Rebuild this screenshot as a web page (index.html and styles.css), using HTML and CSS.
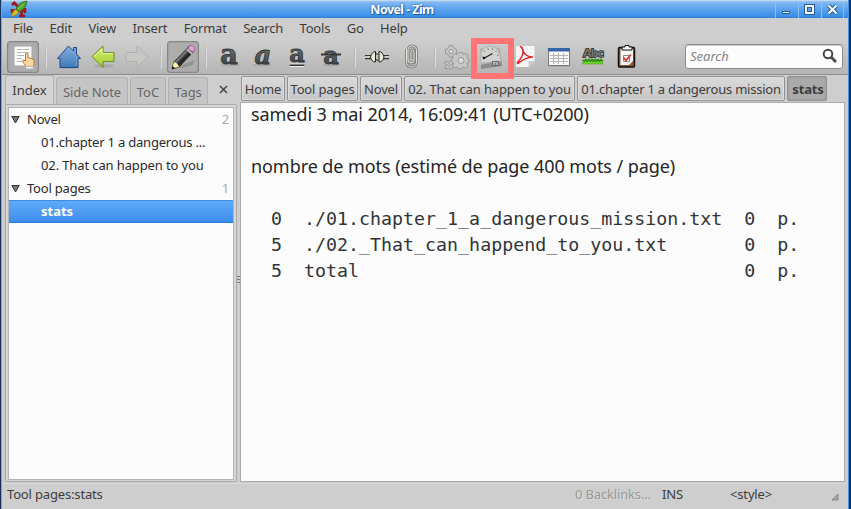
FILE: index.html
```html
<!DOCTYPE html>
<html lang="fr">
<head>
<meta charset="utf-8">
<title>Novel - Zim</title>
<link rel="stylesheet" href="styles.css">
</head>
<body>
<div class="window">
  <header class="titlebar">
    <svg class="logo" width="18" height="18" viewBox="0 0 18 18"><path d="M4 2.500l4 4M2 5l3-3M2 11l5-1M2 9v4M11 10l1 6M9 16h6M11 9l4 2M15 8v5" fill="none" stroke="#a5151c" stroke-width="2.600"/><path d="M1 17Q2 11 6 9l3 3q-3 4-8 5" fill="#d8b92a" stroke="#756b1b" stroke-width=".7"/><path d="M6 9Q9 2 17 1q-1 8-8 11z" fill="#55a82b" stroke="#246720" stroke-width=".8"/><path d="M8 9l6-5" stroke="#8fd058"/></svg>
    <h1>Novel - Zim</h1>
    <div class="controls">
      <span><svg width="11" height="11"><path d="M1.500 7.500h7v2h-7z" fill="#fff" stroke="#235996"/></svg></span>
      <span><svg width="11" height="11"><path d="M2 2h7v7H2z" fill="none" stroke="#235996" stroke-width="4"/><path d="M2 2h7v7H2z" fill="none" stroke="#fff" stroke-width="2"/></svg></span>
      <span><svg width="11" height="11"><path d="M1.500 1.500l8 8m0-8l-8 8" stroke="#235996" stroke-width="4"/><path d="M1.500 1.500l8 8m0-8l-8 8" stroke="#fff" stroke-width="2"/></svg></span>
    </div>
  </header>
  <nav class="menu"><span>File</span><span>Edit</span><span>View</span><span>Insert</span><span>Format</span><span>Search</span><span>Tools</span><span>Go</span><span>Help</span></nav>
  <div class="toolbar">
    <span class="tool pressed"><svg viewBox="0 0 34 34"><path d="M9 7h16v18H9z" fill="#fff" stroke="#f3f3ef"/><path d="M11 9.500h12M11 12.500h12M11 15.500h7M11 18.500h5M11 21.500h5" stroke="#b7b7b3"/><path d="M19.500 21v-7q1.500-2 2.500 0v4q1.500-1 2 .5 1.500-.8 2 .5 2-.5 2 1.500v3q0 2-1.500 3h-6q-3-3-4-6 1-1.500 3 .5z" fill="#fbd6a2" stroke="#b87624"/><path d="M20 27.500h7" stroke="#e9f3ff" stroke-width="2"/></svg></span>
    <i class="sep"></i>
    <span class="tool"><svg viewBox="0 0 34 34"><ellipse cx="17" cy="28" rx="11" ry="1" fill="#aaa"/><path d="M16.500 6l5 5V7.500h3V14l4 4.500H26v9H8v-9H5.500z" fill="url(#blue)" stroke="#204a87"/><path d="M16.500 8l8 8.500V26" fill="none" stroke="#85b3df" opacity=".6"/></svg></span>
    <span class="tool"><svg viewBox="0 0 34 34"><ellipse cx="18" cy="26" rx="10" ry="2" fill="#aaa"/><path d="M6 16.500L17 6v6.500h11v9H17v6z" fill="url(#green)" stroke="#669020"/><path d="M8 16.500L16 9v4.500h11" fill="none" stroke="#e8f8a8"/></svg></span>
    <span class="tool"><svg viewBox="0 0 34 34"><path d="M28 16.500L17 6v6.500H6v9h11v6z" fill="#c7c7c5" stroke="#aeb0ac"/></svg></span>
    <i class="sep"></i>
    <span class="tool pressed"><svg viewBox="0 0 34 34"><path d="M11 27l18-7-2 5-11 3z" fill="#777" opacity=".5"/><path d="M8 22L23.500 6l5 4.500L13 27l-7 2z" fill="#444" stroke="#222"/><path d="M9 23L22 9.500" stroke="#787878" stroke-width="2"/><path d="M12 25L26 11" stroke="#222" stroke-width="2"/><path d="M22 8l3-3q4 1 4 5l-2.500 2z" fill="#dda4cf" stroke="#a6689c"/><path d="M21 9l5 5" stroke="#bbb" stroke-width="2"/><path d="M8 22l-2 6.500L13 27q-1-4-5-5z" fill="#fff3a1"/><path d="M6 26v3l3-1z" fill="#111"/></svg></span>
    <i class="sep"></i>
    <span class="tool"><svg viewBox="0 0 34 34"><ellipse cx="18" cy="25" rx="10" ry="1.500" fill="#aaa"/><text x="17" y="24" text-anchor="middle" class="letter big">a</text></svg></span>
    <span class="tool"><svg viewBox="0 0 34 34"><ellipse cx="16" cy="25" rx="10" ry="1.500" fill="#aaa"/><text x="17" y="24" text-anchor="middle" class="letter italic">a</text></svg></span>
    <span class="tool"><svg viewBox="0 0 34 34"><text x="17" y="21.500" text-anchor="middle" class="letter">a</text><path d="M9.500 25.200h15" stroke="#fff" stroke-width="3"/><path d="M9.500 25.200h15" stroke="#2e3436" stroke-width="1.600"/></svg></span>
    <span class="tool"><svg viewBox="0 0 34 34"><ellipse cx="17" cy="25" rx="9" ry="1.500" fill="#aaa"/><text x="17" y="24" text-anchor="middle" class="letter">a</text><path d="M7 14.500h20" stroke="#2e3436" stroke-width="2"/></svg></span>
    <i class="sep narrow"></i>
    <span class="tool"><svg viewBox="0 0 34 34"><path d="M5 16.500h7m11 0h6" stroke="#fff" stroke-width="5"/><path d="M5 15.500h7m10 0h7M5 18.500h7m10 0h7" stroke="#333" stroke-width="1.400"/><path d="M15.500 11.500v10.500q-4 0-5-5 1-5 5-5.500zM19 11.500v10.500q4 0 5-5-1-5-5-5.500z" fill="#e9e7d8" stroke="#24241f"/><path d="M15.500 14h3m-3 6h3" stroke="#24241f"/></svg></span>
    <span class="tool"><svg viewBox="0 0 34 34"><path d="M12.500 9v12q0 6 5 6t5-6V11q0-5-4.500-5T14 11v9q0 3 3 3t3-3v-8q0-2-1.500-2T17 12v7" fill="none" stroke="#80827f" stroke-width="2.800"/><path d="M12.500 9v12q0 6 5 6t5-6V11q0-5-4.500-5T14 11v9q0 3 3 3t3-3v-8q0-2-1.500-2T17 12v7" fill="none" stroke="#e3e4e0" stroke-width="1"/></svg></span>
    <i class="sep narrow"></i>
    <span class="tool"><svg viewBox="0 0 34 34"><g fill="#c6c6c4" stroke="#969895"><path d="M9.500 5.500h3l1 2 3 2v4l-3 1-1 2.500h-3l-1-2.500-3-1v-4l3-2z"/><path d="M19.500 12.500h3l1 2 3-1 1.500 2.500-1 2 2 1v3l-2 1 1 3-2.500 2-3-1-1 2h-3l-1-2-3 1-2-2 1-3-2-1v-3l2-1-1-2.500 2-2 3 1z"/><path d="M5.500 21l3 1 3-1 1.500 1.500-1 2.500 1 3-1.500 1-3-1-3 1L5 28l1-3-1-2.500z"/></g><g fill="#ddd" stroke="#969895"><circle cx="11" cy="11.500" r="2"/><circle cx="21" cy="20.500" r="3"/><circle cx="9" cy="25" r="1.300"/></g></svg></span>
    <span class="tool"><svg viewBox="0 0 34 34"><path d="M6 8l3 1q4-4 9-3l6 2 2-1 2 14v5L7 29z" fill="#b0b1ae"/><path d="M7 25l20-4 1 5-21 3z" fill="#8b8c89"/><path d="M7 23V13Q10 6 17 6q9 2 10 15z" fill="#d2d2d0" stroke="#b5b5b3"/><path d="M10 11l1 1m3-3.500l.5 1.500m4-1.500v1.500m4 1l-1 1m3 3l-1.500.500M8 17h1.500" stroke="#777"/><path d="M10.500 18l8-4.500" stroke="#222" stroke-width="1.300"/><circle cx="10" cy="18" r="1.200"/><path d="M18.500 21.500h6v4h-6z" fill="#b5b5b3" stroke="#666"/><path d="M21.500 23v2" stroke="#777"/></svg></span>
    <span class="tool"><svg viewBox="0 0 34 34"><path d="M8 6h18.500v15l-6 6H8z" fill="#f5f5f5"/><path d="M26.500 21h-6v6z" fill="#ccc"/><path d="M12 7q2-1 3 4 3 6 10 6-6-.500-15 6.500-2 0 2-4 5-7 2-12" fill="none" stroke="#df262b" stroke-width="1.500"/></svg></span>
    <span class="tool"><svg viewBox="0 0 34 34"><path d="M6 9h22v18H6z" fill="#aaa"/><path d="M6.500 8.500h21v17h-21z" fill="#f8f8f7" stroke="#777"/><path d="M6 8h22v3.500H6z" fill="#3465a4"/><path d="M8 15.500h18m-18 3h18m-18 3h18M11.500 13v11m5-11v11m5-11v11" stroke="#b5b5b3"/></svg></span>
    <span class="tool"><svg viewBox="0 0 34 34"><text x="17" y="17" text-anchor="middle" class="abc">Abc</text><path d="M7 20l1.500 1.500L10 20l1.500 1.500L13 20l1.500 1.500L16 20l1.500 1.500L19 20l1.500 1.500L22 20l1.500 1.500L25 20l1.500 1.500M6.500 23h20.500" fill="none" stroke="#348d13" stroke-width="2.400"/><path d="M7 22l1.500 1.500L10 22l1.500 1.500L13 22l1.500 1.500L16 22l1.500 1.500L19 22l1.500 1.500L22 22l1.500 1.500L25 22l1.500 1.500" fill="none" stroke="#70dc2d" stroke-width="1.500"/></svg></span>
    <span class="tool"><svg viewBox="0 0 34 34"><rect x="8.500" y="7.500" width="16" height="19.500" rx="1" fill="#8b5a32" stroke="#111" stroke-width="1.500"/><path d="M10.500 9h12.500v12l-4 4h-8.500z" fill="#f5f5f5"/><path d="M12 10V7h3V5.500h4V7h3v3z" fill="#fff" stroke="#111"/><path d="M13.500 15.500h6v6h-6z" fill="#fff" stroke="#888"/><path d="M13.500 17.500l2.500 3 5-6" fill="none" stroke="#dc3b2b" stroke-width="1.800"/></svg></span>
    <div class="search"><em>Search</em><svg width="18" height="18"><circle cx="7" cy="6" r="4.300" fill="none" stroke="#484848" stroke-width="2"/><path d="M10 9l5 5" stroke="#484848" stroke-width="2.800"/></svg></div>
    <div class="highlight"></div>
  </div>
  <main class="body">
    <aside class="side">
      <div class="tabs"><span class="tab active">Index</span><span class="tab t2">Side Note</span><span class="tab t3">ToC</span><span class="tab t4">Tags</span><svg class="close" width="9" height="9"><path d="M1 1l7 7m0-7l-7 7" stroke="#484848" stroke-width="1.600"/></svg></div>
      <div class="notebook"><div class="tree">
        <div class="row"><svg class="tri" width="9" height="8"><path d="M.8.500h7.400L4.500 7z" fill="#777" stroke="#333"/></svg><span>Novel</span><small>2</small></div>
        <div class="row child"><span>01.chapter 1 a dangerous ...</span></div>
        <div class="row child second"><span>02. That can happen to you</span></div>
        <div class="row"><svg class="tri" width="9" height="8"><path d="M.8.500h7.400L4.500 7z" fill="#777" stroke="#333"/></svg><span>Tool pages</span><small>1</small></div>
        <div class="row child selected"><span>stats</span></div>
      </div></div>
    </aside>
    <div class="splitter"><i></i><i></i><i></i></div>
    <section class="page">
      <div class="path"><span class="p1">Home</span><span class="p2">Tool pages</span><span class="p3">Novel</span><span class="p4">02. That can happen to you</span><span class="p5">01.chapter 1 a dangerous mission</span><span class="p6">stats</span></div>
      <div class="editor">
        <p>samedi 3 mai 2014, 16:09:41 (UTC+0200)</p>
        <p class="est">nombre de mots (estimé de page 400 mots / page)</p>
<pre>  0  ./01.chapter_1_a_dangerous_mission.txt  0  p.
  5  ./02._That_can_happend_to_you.txt       0  p.
  5  total                                   0  p.</pre>
      </div>
    </section>
  </main>
  <footer class="status"><span class="where">Tool pages:stats</span><span class="links">0 Backlinks...</span><span class="ins">INS</span><span class="style">&lt;style&gt;</span><svg width="8" height="8"><path d="M7 1v6H1z" fill="#aaa" stroke="#888"/></svg></footer>
</div>
<svg width="0" height="0" class="defs"><defs><linearGradient id="blue" x2="0" y2="1"><stop stop-color="#84b0dc"/><stop offset="1" stop-color="#407ab8"/></linearGradient><linearGradient id="green" x2="0" y2="1"><stop stop-color="#d9ef70"/><stop offset="1" stop-color="#9fca32"/></linearGradient><linearGradient id="ink" x2="0" y2="1"><stop stop-color="#888a85"/><stop offset="1" stop-color="#2e3436"/></linearGradient></defs></svg>
</body>
</html>
```
FILE: styles.css
```css
* { box-sizing: border-box; }
body { margin: 0; width: 851px; height: 509px; overflow: hidden; background: #16325c; font: 13px/20px "Noto Sans", sans-serif; letter-spacing: -.16px; color: #3c3c3c; white-space: nowrap; }
svg { display: block; }
.defs { position: absolute; }
.window { width: 848px; height: 509px; margin-left: 1px; border-left: 1px solid #66aaf5; border-right: 1px solid #4094f1; background: #cecece; display: flex; flex-direction: column; }
.titlebar { height: 18px; display: flex; align-items: center; background: linear-gradient(#d5e5f5 0, #84b8f0 2px, #66a9ee 7px, #3d8fe8 16px, #2f7fd9); }
.logo { margin-left: 8px; }
h1 { flex: 1; margin: 0; padding-left: 1px; text-align: center; font-size: 12.5px; line-height: 19px; color: #fff; text-shadow: 0 0 2px #174e90, 1px 1px 0 #2464ae; letter-spacing: -.58px; }
.controls { display: flex; margin-right: 4px; }
.controls span { width: 23px; height: 17px; border-left: 1px solid #8cbdf4; padding: 3px 5px; }
.controls span:last-child { border-right: 1px solid #8cbdf4; }
.menu { height: 22px; padding-left: 11px; display: flex; gap: 16.5px; line-height: 21px; letter-spacing: -.21px; }
.toolbar { height: 35px; padding: 1px 0 0 5px; display: flex; background: linear-gradient(#cecece, #b5b5b5); border-bottom: 1px solid #8d8d8d; position: relative; }
.tool { width: 34px; height: 32px; display: flex; justify-content: center; flex: none; }
.tool svg { width: 34px; height: 34px; margin-top: -1px; flex: none; }
.pressed { width: 32px; border: 1px solid #858585; border-radius: 3px; background: #adadad; box-shadow: inset 0 0 2px #888; }
.tool.pressed svg { margin-top: -2px; }
.sep { width: 13px; height: 22px; margin-top: 5px; flex: none; background: linear-gradient(90deg, transparent 6px, #bababa 6px, #bababa 7px, #dcdcdc 7px, #dcdcdc 8px, transparent 8px); }
.narrow { width: 12px; }
.letter { font: bold 24px "DejaVu Serif", serif; fill: url(#ink); stroke: #2e3436; stroke-width: .8px; letter-spacing: 0; }
.big { font-size: 27px; }
.italic { font-size: 26px; font-style: italic; }
.abc { font: bold 11px "DejaVu Sans", sans-serif; fill: #73756f; stroke: #222; stroke-width: 1.4px; paint-order: stroke; letter-spacing: -1px; }
.search { width: 158px; height: 25px; margin: 3px 0 0 41px; padding: 0 3px 0 4px; border: 1px solid #8c8c8c; border-radius: 3px; background: #fcfcfc; box-shadow: inset 0 1px #ccc; display: flex; justify-content: space-between; align-items: center; color: #858585; letter-spacing: 0; }
.search em { margin-top: -1px; }
.highlight { position: absolute; left: 469px; top: -2px; width: 43px; height: 41px; border: 6px solid #ff7474; z-index: 2; }
.body { height: 408px; display: flex; }
.side { width: 235px; padding-left: 3px; display: flex; flex-direction: column; }
.tabs { height: 29px; display: flex; align-items: flex-end; letter-spacing: 0; }
.tab { height: 27px; margin-right: 2px; border: 1px solid #b1b1b1; border-bottom: 0; border-radius: 3px 3px 0 0; background: #c5c5c5; color: #666; text-align: center; line-height: 28px; }
.active { width: 49px; height: 29px; background: #d4d4d4; color: #3c3c3c; line-height: 29px; }
.t2 { width: 72px; letter-spacing: -.1px; }
.t3 { width: 36px; }
.t4 { width: 40px; letter-spacing: -.2px; }
.close { margin: 0 0 10px 9px; }
.notebook { height: 378px; width: 232px; border: 1px solid #aaa; border-radius: 0 2px 2px 2px; background: #d6d6d6; padding: 2px; }
.tree { height: 373px; border: 1px solid #b4b4b4; background: #fcfcfc; }
.row { height: 23px; display: flex; align-items: center; color: #2a2a2a; padding: 0 4px 0 2px; line-height: 23px; letter-spacing: -.2px; }
.tri { margin-right: 7px; }
.row small { margin-left: auto; font-size: 13px; color: #aaa; }
.child { padding-left: 32px; }
.second { letter-spacing: -.12px; }
.selected { color: #fff; font-weight: bold; background: linear-gradient(#5fa9fa, #3c8eec); border-top: 1px solid #3d8cdc; border-bottom: 1px solid #267bd8; line-height: 21px; letter-spacing: 0; }
.splitter { width: 3px; display: flex; flex-direction: column; justify-content: center; align-items: center; gap: 2px; }
.splitter i { width: 3px; height: 1px; background: #777; }
.page { flex: 1; margin-right: 3px; min-width: 0; }
.path { height: 27px; padding: 1px 0 0 1px; display: flex; gap: 2px; }
.path span { flex: none; height: 25px; text-align: center; line-height: 24px; border: 1px solid #929292; border-radius: 2px; background: linear-gradient(#dadada, #c6c6c6); box-shadow: inset 0 0 0 1px #dedede; }
.path .p1 { width: 44px; }
.path .p2 { width: 71px; }
.path .p3 { width: 42px; }
.path .p4 { width: 171px; letter-spacing: -.12px; }
.path .p5 { width: 208px; letter-spacing: -.22px; }
.path .p6 { width: 40px; background: #aaa; box-shadow: inset 0 0 2px #888; font-weight: bold; padding-left: 2px; }
.editor { height: 380px; border: 1px solid #aaa; background: #fcfcfc; padding: 0 0 0 10px; color: #242424; letter-spacing: -.07px; }
.editor p { margin: 0; font-size: 18px; line-height: 26px; margin-top: -2px; }
.editor .est { margin: 26px 0 27px; }
.editor pre { margin: 0 0 0 -2px; font: 18.3px/26px "DejaVu Sans Mono", monospace; letter-spacing: 0; color: #303438; }
.status { height: 26px; padding: 1px 0 0 5px; display: flex; line-height: 19px; border-top: 1px solid #dadada; }
.where { width: 568px; }
.links { width: 87px; color: #999; text-shadow: 1px 1px #ddd; }
.ins { width: 68px; }
.style { width: 101px; }
.status svg { margin-top: 8px; }
```
